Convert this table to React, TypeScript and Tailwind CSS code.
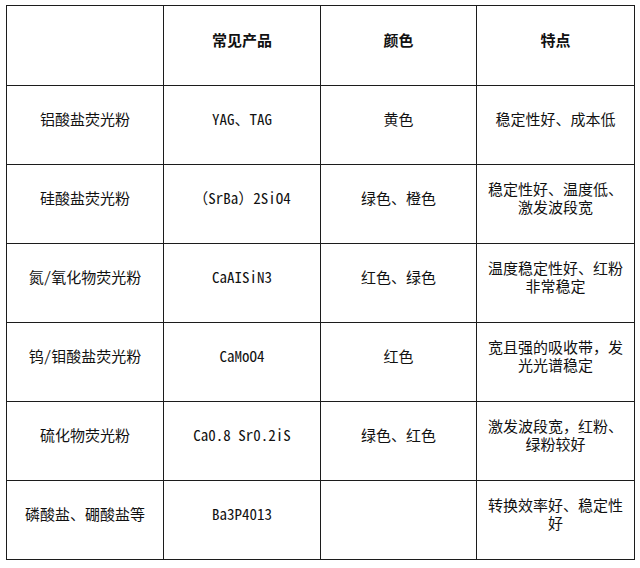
const header = ["", "常见产品", "颜色", "特点"];

const rows: string[][] = [
  ["铝酸盐荧光粉", "YAG、TAG", "黄色", "稳定性好、成本低"],
  ["硅酸盐荧光粉", "（SrBa）2SiO4", "绿色、橙色", "稳定性好、温度低、激发波段宽"],
  ["氮/氧化物荧光粉", "CaAISiN3", "红色、绿色", "温度稳定性好、红粉非常稳定"],
  ["钨/钼酸盐荧光粉", "CaMoO4", "红色", "宽且强的吸收带，发光光谱稳定"],
  ["硫化物荧光粉", "Ca0.8 Sr0.2iS", "绿色、红色", "激发波段宽，红粉、绿粉较好"],
  ["磷酸盐、硼酸盐等", "Ba3P4013", "", "转换效率好、稳定性好"],
];

// latin runs use the half-width forms, like the SimHei look of the original
function Mixed({ text }: { text: string }) {
  const parts = text.split(/([\x20-\x7e]+)/).filter(Boolean);
  return (
    <>
      {parts.map((p, i) =>
        /^[\x20-\x7e]+$/.test(p) ? (
          <span key={i} className="[font-feature-settings:'hwid'] whitespace-pre">
            {p}
          </span>
        ) : (
          <span key={i}>{p}</span>
        )
      )}
    </>
  );
}

function Cell({ text, bold }: { text: string; bold?: boolean }) {
  return (
    <div className="flex items-center justify-center border-r border-b border-[#1c1c1c] px-[9px] pb-[12px]">
      <p className={`text-center text-[15px] leading-[18px] ${bold ? "font-bold" : ""}`}>
        <Mixed text={text} />
      </p>
    </div>
  );
}

export default function App() {
  return (
    <div className="min-h-[568px] w-[640px] bg-white pl-[6px] pt-[5px] text-[#111] [font-family:'Noto_Sans_CJK_SC',sans-serif]">
      <div className="grid w-[629px] grid-cols-[157px_157px_156px_158px] grid-rows-[80px_repeat(6,79px)] border-l border-t border-[#1c1c1c]">
        {header.map((h, i) => (
          <Cell key={"h" + i} text={h} bold />
        ))}
        {rows.map((r, ri) =>
          r.map((c, ci) => <Cell key={ri + "-" + ci} text={c} />)
        )}
      </div>
    </div>
  );
}
